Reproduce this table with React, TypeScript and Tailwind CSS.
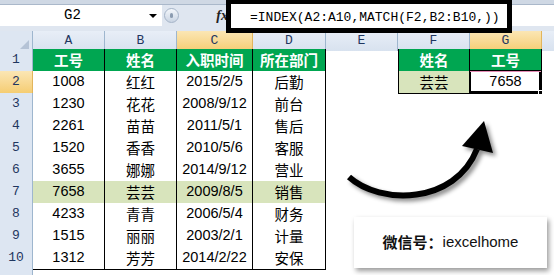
import React from 'react'

const cols = ['A', 'B', 'C', 'D', 'E', 'F', 'G']
const activeCols = ['C', 'G']

const rows = [
  ['工号', '姓名', '入职时间', '所在部门'],
  ['1008', '红红', '2015/2/5', '后勤'],
  ['1230', '花花', '2008/9/12', '前台'],
  ['2261', '苗苗', '2011/5/1', '售后'],
  ['1520', '香香', '2010/5/6', '客服'],
  ['3655', '娜娜', '2014/9/12', '营业'],
  ['7658', '芸芸', '2009/8/5', '销售'],
  ['4233', '青青', '2006/5/4', '财务'],
  ['1515', '丽丽', '2003/2/1', '计量'],
  ['1312', '芳芳', '2014/2/22', '安保'],
]

const gridCols = 'grid grid-cols-[33px_72px_72px_76px_73px_72px_72px_72px_12px]'
const mono = "font-['Liberation_Mono',monospace]"
const cellFont = "font-['Liberation_Sans','Noto_Sans_CJK_SC',sans-serif]"
const cjk = "font-['Noto_Sans_CJK_SC',sans-serif]"

const Arrow = () => (
  <svg className="pointer-events-none absolute left-0 top-0" width="554" height="275" viewBox="0 0 554 275">
    <defs>
      <filter id="sh" x="-20%" y="-20%" width="140%" height="140%">
        <feDropShadow dx="3" dy="3" stdDeviation="2" floodColor="#000" floodOpacity="0.45" />
      </filter>
    </defs>
    <g filter="url(#sh)">
      <path d="M349 177 C380 205 455 205 477 149" fill="none" stroke="#000" strokeWidth="6" strokeLinecap="butt" />
      <polygon points="484,121 462,146 493,153" fill="#000" />
    </g>
  </svg>
)

const isCjk = (s: string) => /[\u4e00-\u9fff]/.test(s)

const App = () => {
  return (
    <div className={`relative h-[275px] w-[554px] overflow-hidden bg-white ${cellFont}`}>
      {/* formula bar */}
      <div className="flex h-[31px] flex-col bg-[#dfe6f0]">
        <div className="h-[5px] border-b border-[#aab8ca] bg-[#cfd8e4]" />
        <div className="flex h-[21px]">
          <div className="relative flex w-[162px] items-center bg-white">
            <span className={`w-[145px] text-center text-[14px] text-black ${mono}`}>G2</span>
            <span className="absolute left-[149px] top-[9px] h-0 w-0 border-x-[4px] border-t-[4px] border-x-transparent border-t-black" />
          </div>
          <div className="flex w-[18px] items-center justify-center">
            <div className="flex h-[15px] w-[15px] items-center justify-center rounded-full border border-[#a5b4c8] bg-gradient-to-b from-[#f4f7fb] to-[#c9d4e3]">
              <div className="h-[5px] w-[3px] rounded-sm bg-[#8b9bb0]" />
            </div>
          </div>
          <div className="flex w-[48px] items-center justify-end">
            <span className="font-['Liberation_Serif',serif] text-[14px] font-bold italic text-[#222]">fx</span>
          </div>
          <div className="flex-1 bg-white" />
        </div>
        <div className="h-[5px]" />
      </div>

      {/* column headers */}
      <div className={`${gridCols} h-[18px] border-b border-[#9eb6ce] ${mono} text-[13px] text-[#1f3660]`}>
        <div className="relative border-r border-[#9eb6ce] bg-[#dde6f2]">
          <span className="absolute bottom-[2px] right-[3px] h-0 w-0 border-b-[9px] border-l-[9px] border-b-[#b5c3d6] border-l-transparent" />
        </div>
        {cols.map((c) => (
          <div
            key={c}
            className={`flex items-center justify-center border-r ${
              activeCols.includes(c)
                ? 'border-[#e2b55c] bg-gradient-to-b from-[#fbe6b4] to-[#f5cd72]'
                : 'border-[#9eb6ce] bg-gradient-to-b from-[#e8eef7] to-[#d8e2ef]'
            }`}
          >
            {c}
          </div>
        ))}
        <div className="bg-gradient-to-b from-[#e8eef7] to-[#d8e2ef]" />
      </div>

      {/* rows */}
      {Array.from({ length: 11 }).map((_, i) => {
        const data = rows[i]
        const isHead = i === 0
        const isHi = i === 6
        const rowNum = i + 1
        return (
          <div key={i} className={`${gridCols} h-[22px]`}>
            <div
              className={`flex items-end justify-center border-b border-r pb-[1px] text-[13px] text-[#1f3660] ${mono} ${
                rowNum === 2
                  ? 'border-[#e2b55c] bg-gradient-to-b from-[#fbe6b4] to-[#f5cd72]'
                  : 'border-[#9eb6ce] bg-[#dde6f2]'
              }`}
            >
              {rowNum <= 10 ? rowNum : ''}
            </div>
            {[0, 1, 2, 3].map((j) => (
              <div
                key={j}
                className={
                  data
                    ? `flex items-center justify-center border-b border-r border-black text-[14.5px] ${
                        isCjk(data[j]) ? cjk : ''
                      } ${
                        isHead
                          ? 'bg-[#00a651] font-bold text-white'
                          : isHi
                            ? 'bg-[#d8e4bc] text-black'
                            : 'bg-white text-black'
                      }`
                    : ''
                }
              >
                {data ? data[j] : ''}
              </div>
            ))}
            <div />
            {i === 0 && (
              <>
                <div className={`flex items-center justify-center border-b border-l border-r border-black bg-[#00a651] text-[14.5px] font-bold text-white ${cjk}`}>
                  姓名
                </div>
                <div className={`flex items-center justify-center border-b border-r border-black bg-[#00a651] text-[14.5px] font-bold text-white ${cjk}`}>
                  工号
                </div>
              </>
            )}
            {i === 1 && (
              <>
                <div className={`flex items-center justify-center border-b border-l border-r border-black bg-[#d8e4bc] text-[14.5px] text-black ${cjk}`}>
                  芸芸
                </div>
                <div className="relative flex items-center justify-center border-b border-r border-black bg-white text-[14.5px] text-black">
                  7658
                  <div className="absolute -left-px -top-px bottom-0 right-0 border-2 border-black shadow-[inset_0_0_0_1px_#fff]" />
                  <div className="absolute left-0 right-0 top-0 h-px bg-[#e58bb5]" />
                  <div className="absolute -bottom-[2px] -right-[2px] h-[5px] w-[5px] border border-white bg-black" />
                </div>
              </>
            )}
            {i > 1 && (
              <>
                <div />
                <div />
              </>
            )}
            <div />
          </div>
        )
      })}

      {/* highlighted formula */}
      <div className="absolute left-[226px] top-[-1px] flex h-[34px] w-[286px] items-center border-[5px] border-black bg-white pl-[19px] pt-[3px]">
        <span className={`text-[13px] text-black ${mono}`}>=INDEX(A2:A10,MATCH(F2,B2:B10,))</span>
      </div>

      <Arrow />

      {/* wechat card */}
      <div className="absolute left-[354px] top-[217px] flex h-[51px] w-[193px] items-center justify-center bg-white text-[15px] text-[#111] shadow-[2px_3px_5px_rgba(0,0,0,0.4)]">
        <span className={`font-bold ${cjk}`}>微信号：</span>
        <span>iexcelhome</span>
      </div>
    </div>
  )
}

export default App
